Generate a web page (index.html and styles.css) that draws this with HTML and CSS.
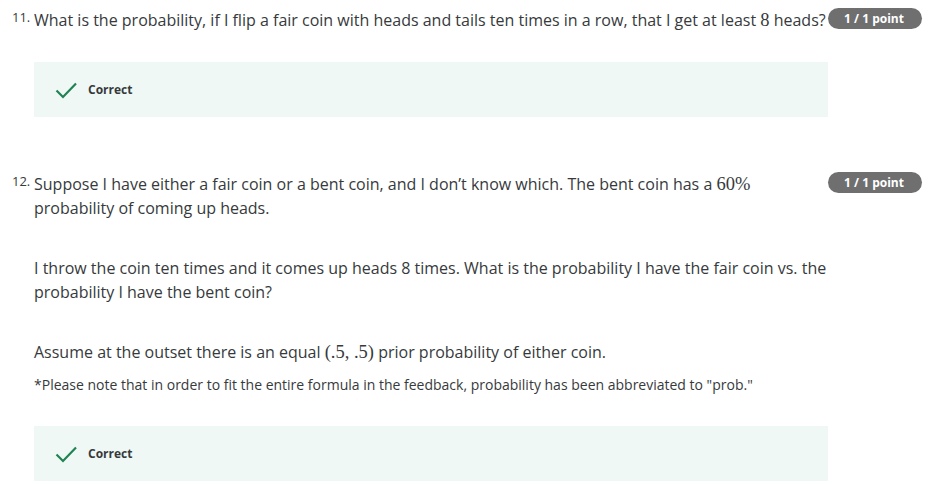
FILE: index.html
```html
<!DOCTYPE html>
<html lang="en">
<head>
<meta charset="utf-8">
<title>Quiz</title>
<link rel="stylesheet" href="styles.css">
</head>
<body>
<div class="quiz">
  <section class="question q11">
    <div class="num">11.</div>
    <div class="body">
      <p class="line nowrap">What is the probability, if I flip a fair coin with heads and tails ten times in a row, that I get at least <span class="math">8</span> heads?</p>
    </div>
    <div class="score"><span class="badge">1 / 1 point</span></div>
    <div class="feedback">
      <svg class="check" width="24" height="24" viewBox="0 0 24 24"><path d="M2.5 12.5 L9 19 L22 5.5" fill="none" stroke="#1f8354" stroke-width="2.2"/></svg>
      <span class="fb-text">Correct</span>
    </div>
  </section>

  <section class="question q12">
    <div class="num">12.</div>
    <div class="body">
      <p class="line">Suppose I have either a fair coin or a bent coin, and I don’t know which. The bent coin has a <span class="math">60%</span> probability of coming up heads.</p>
      <p class="line">I throw the coin ten times and it comes up heads 8 times. What is the probability I have the fair coin vs. the probability I have the bent coin?</p>
      <p class="line">Assume at the outset there is an equal <span class="math">(.5, .5)</span> prior probability of either coin.</p>
      <p class="note">*Please note that in order to fit the entire formula in the feedback, probability has been abbreviated to "prob."</p>
    </div>
    <div class="score"><span class="badge">1 / 1 point</span></div>
    <div class="feedback">
      <svg class="check" width="24" height="24" viewBox="0 0 24 24"><path d="M2.5 12.5 L9 19 L22 5.5" fill="none" stroke="#1f8354" stroke-width="2.2"/></svg>
      <span class="fb-text">Correct</span>
    </div>
  </section>
</div>
</body>
</html>
```
FILE: styles.css
```css
html, body {
  margin: 0;
  padding: 0;
  background: #ffffff;
}
body {
  font-family: "Open Sans", "Noto Sans", sans-serif;
  color: #373a3c;
}
.quiz {
  padding: 8px 14px 0 12px;
}
.question {
  display: grid;
  grid-template-columns: 22px 794px 94px;
  align-items: start;
}
.q12 {
  margin-top: 55px;
}
.num {
  font-size: 13px;
  line-height: 18px;
  color: #373a3c;
}
.body {
  min-width: 0;
}
.line {
  margin: 0;
  font-size: 16px;
  line-height: 24px;
}
.line + .line {
  margin-top: 36px;
}
.nowrap {
  white-space: nowrap;
}
.math {
  font-family: "Liberation Serif", "DejaVu Serif", serif;
  font-size: 18.5px;
}
.note {
  margin: 11px 0 0;
  font-size: 14px;
  line-height: 20px;
}
.score {
  display: flex;
  justify-content: flex-end;
}
.badge {
  display: inline-block;
  width: 94px;
  height: 21px;
  line-height: 21px;
  border-radius: 11px;
  background: #6f6f6f;
  color: #ffffff;
  font-size: 12px;
  font-weight: 700;
  text-align: center;
  box-sizing: border-box;
  padding-right: 2px;
}
.feedback {
  grid-column: 2;
  display: flex;
  align-items: center;
  height: 55px;
  margin-top: 30px;
  padding-left: 20px;
  background: #f0f8f5;
  box-sizing: border-box;
}
.q12 .feedback {
  margin-top: 31px;
}
.check {
  display: block;
  margin-top: 1px;
}
.fb-text {
  margin-left: 10px;
  font-size: 12px;
  font-weight: 700;
  color: #373a3c;
}
```
